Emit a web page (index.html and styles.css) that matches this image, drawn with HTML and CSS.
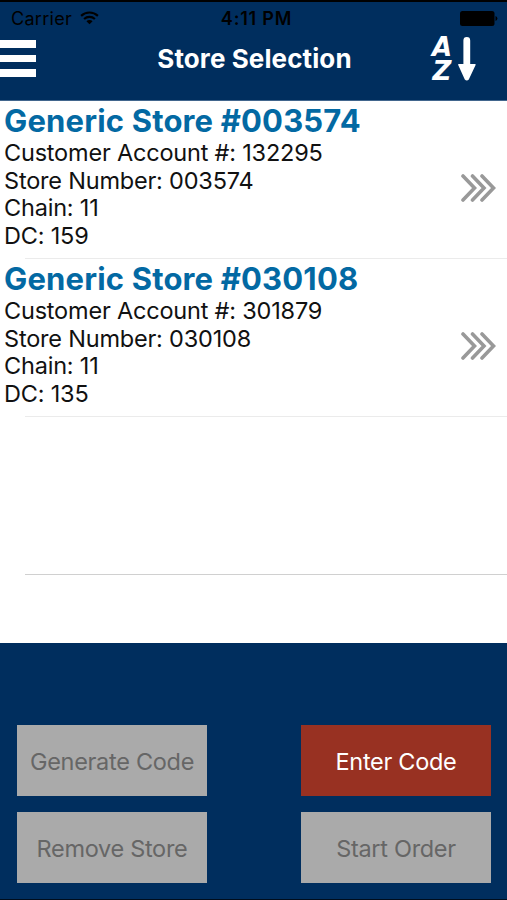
FILE: index.html
```html
<!DOCTYPE html>
<html lang="en">
<head>
    <meta charset="UTF-8">
    <meta name="viewport" content="width=device-width, initial-scale=1.0">
    <title>Store Selection</title>
    <link rel="stylesheet" href="styles.css">
</head>
<body>
    <div class="screen">
        <header class="header">
            <div class="status-bar">
                <div class="carrier">
                    <span>Carrier</span>
                    <svg width="19" height="14" viewBox="0 0 20 15" fill="none" stroke="#000" stroke-width="2.3">
                        <path d="M1 5.2a13 13 0 0 1 18 0M4.2 8.6a8.4 8.4 0 0 1 11.6 0"/>
                        <path d="M10 14.2L6.7 11a4.7 4.7 0 0 1 6.6 0z" fill="#000" stroke="none"/>
                    </svg>
                </div>
                <span class="time">4:11 PM</span>
                <svg class="battery" width="38" height="15" viewBox="0 0 38 15">
                    <rect width="34.5" height="15" rx="2.5"/>
                    <path d="M35.5 5a2.6 2.6 0 0 1 0 5z"/>
                </svg>
            </div>
            <div class="nav-bar">
                <button class="menu" aria-label="Menu">
                    <span></span>
                    <span></span>
                    <span></span>
                </button>
                <h1>Store Selection</h1>
                <button class="sort" aria-label="Sort">
                    <span class="letters">
                        <span>A</span>
                        <span>Z</span>
                    </span>
                    <svg width="18" height="44" viewBox="0 0 18 44" fill="#fff">
                        <path d="M5.4 3.4a3.4 3.4 0 0 1 6.8 0V27h4.8q1 0 .6 1l-6.8 14.5q-2 2-4 0L.2 28q-.4-1 .6-1h4.6z"/>
                    </svg>
                </button>
            </div>
        </header>

        <ul class="stores">
            <li class="store">
                <div class="info">
                    <h2>Generic Store #003574</h2>
                    <p>Customer Account #: 132295</p>
                    <p>Store Number: 003574</p>
                    <p>Chain: 11</p>
                    <p>DC: 159</p>
                </div>
                <svg class="arrows" width="35" height="28" viewBox="0 0 35 28">
                    <path d="M2 2l11.5 12L2 26M11.5 2L23 14 11.5 26M21 2l11.5 12L21 26"/>
                </svg>
            </li>
            <li class="store">
                <div class="info">
                    <h2>Generic Store #030108</h2>
                    <p>Customer Account #: 301879</p>
                    <p>Store Number: 030108</p>
                    <p>Chain: 11</p>
                    <p>DC: 135</p>
                </div>
                <svg class="arrows" width="35" height="28" viewBox="0 0 35 28">
                    <path d="M2 2l11.5 12L2 26M11.5 2L23 14 11.5 26M21 2l11.5 12L21 26"/>
                </svg>
            </li>
            <li class="store empty"></li>
        </ul>

        <footer class="actions">
            <button class="btn" disabled>Generate Code</button>
            <button class="btn primary">Enter Code</button>
            <button class="btn" disabled>Remove Store</button>
            <button class="btn" disabled>Start Order</button>
        </footer>
    </div>
</body>
</html>
```
FILE: styles.css
```css
* {
    box-sizing: border-box;
}
body {
    margin: 0;
    font-family: Inter, sans-serif;
    background-color: #fff;
}
button {
    border: none;
    padding: 0;
    background: none;
    font-family: inherit;
}
svg {
    display: block;
}
.screen {
    display: flex;
    flex-direction: column;
    width: 507px;
    height: 900px;
    overflow: hidden;
    border-bottom: 1px solid #000d1c;
}
.header {
    height: 101px;
    border-top: 2px solid #000;
    border-bottom: 1px solid #42668d;
    background-color: #002e5e;
}
.status-bar {
    display: grid;
    grid-template-columns: 1fr auto 1fr;
    align-items: center;
    height: 32px;
    padding: 0 9px 0 11px;
    font-size: 18px;
    letter-spacing: 0.3px;
    color: #000;
}
.carrier {
    display: flex;
    align-items: center;
    gap: 8px;
}
.time {
    padding-left: 4px;
    font-weight: 600;
    letter-spacing: 0.8px;
}
.battery {
    justify-self: end;
}
.nav-bar {
    display: grid;
    grid-template-columns: 1fr auto 1fr;
    align-items: center;
    height: 49px;
}
.nav-bar h1 {
    margin: 0;
    padding-left: 2px;
    font-size: 26px;
    font-weight: 700;
    letter-spacing: 0.1px;
    color: #fff;
}
.menu {
    display: flex;
    flex-direction: column;
    gap: 7px;
    width: 36px;
}
.menu span {
    height: 7.5px;
    background-color: #fff;
}
.sort {
    display: flex;
    align-items: center;
    justify-self: end;
    gap: 4px;
    margin-right: 31px;
}
.letters {
    display: flex;
    flex-direction: column;
    width: 24px;
    font-family: "DejaVu Sans", sans-serif;
    font-size: 26px;
    font-weight: 700;
    font-style: italic;
    line-height: 24px;
    color: #fff;
}
.stores {
    flex: 1;
    margin: 0;
    padding: 0;
    list-style: none;
}
.store {
    display: flex;
    justify-content: space-between;
    height: 158px;
    padding: 0 11px 0 4px;
    background: linear-gradient(#ebebeb, #ebebeb) 25px 100% / 100% 1px no-repeat;
}
.store.empty {
    background-image: linear-gradient(#d0d0d0, #d0d0d0);
}
.info h2 {
    margin: 0 0 -1px;
    font-size: 31px;
    font-weight: 700;
    line-height: 39px;
    letter-spacing: 0.17px;
    color: #0369a3;
}
.info p {
    margin: 0;
    font-size: 23.5px;
    line-height: 27.5px;
    letter-spacing: -0.2px;
    color: #111;
}
.arrows {
    margin-top: 73px;
    fill: none;
    stroke: #999;
    stroke-width: 3.6;
    stroke-linecap: round;
}
.actions {
    display: grid;
    grid-template-columns: 190px 190px;
    grid-auto-rows: 71px;
    justify-content: space-between;
    row-gap: 16px;
    height: 256px;
    padding: 82px 16px 0 17px;
    background-color: #002e5e;
}
.btn {
    padding-top: 2px;
    background-color: #aaa;
    font-size: 23.5px;
    letter-spacing: -0.3px;
    color: #666;
}
.btn.primary {
    background-color: #983122;
    color: #fff;
}
```
